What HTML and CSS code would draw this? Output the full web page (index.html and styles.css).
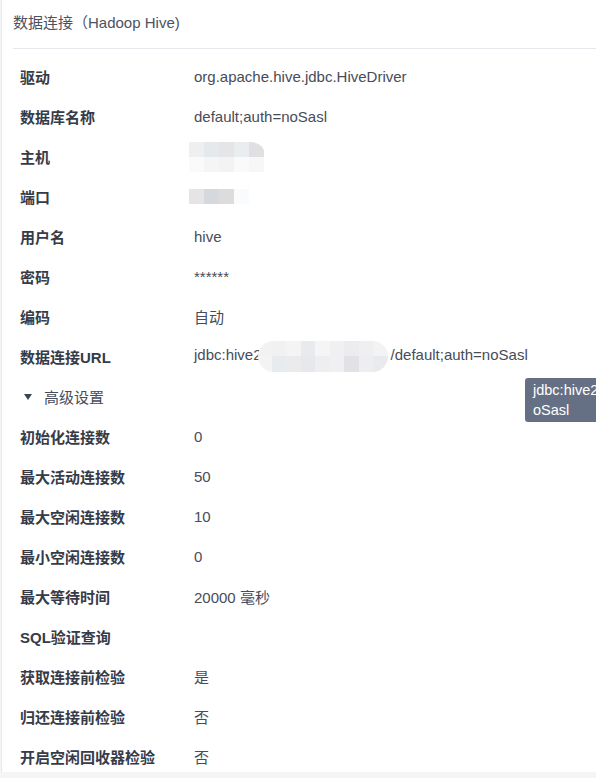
FILE: index.html
```html
<!DOCTYPE html>
<html lang="zh-CN">
<head>
<meta charset="utf-8">
<title>数据连接</title>
<link rel="stylesheet" href="styles.css">
</head>
<body>
<div class="panel">
  <div class="header">数据连接（Hadoop Hive)</div>
  <div class="list">
    <div class="row"><div class="label">驱动</div><div class="value">org.apache.hive.jdbc.HiveDriver</div></div>
    <div class="row"><div class="label">数据库名称</div><div class="value">default;auth=noSasl</div></div>
    <div class="row"><div class="label">主机</div><div class="value">
      <span class="blur blur-host">
        <i style="background:#efefef"></i><i style="background:#e6e9ec"></i><i style="background:#e5e5e7"></i><i style="background:#eaedf0"></i><i style="background:#e0e0e3"></i>
        <i style="background:#fafafa"></i><i style="background:#f5f5f5"></i><i style="background:#f3f3f3"></i><i style="background:#fafafa"></i><i style="background:#f7f7f7"></i>
      </span></div></div>
    <div class="row"><div class="label">端口</div><div class="value">
      <span class="blur blur-port">
        <i style="background:#e5e5e5"></i><i style="background:#d5d9dd"></i><i style="background:#dcdcdc"></i><i style="background:#fafbfd"></i>
      </span></div></div>
    <div class="row"><div class="label">用户名</div><div class="value">hive</div></div>
    <div class="row"><div class="label">密码</div><div class="value">******</div></div>
    <div class="row"><div class="label">编码</div><div class="value">自动</div></div>
    <div class="row"><div class="label">数据连接URL</div><div class="value">jdbc:hive2<span class="blur blur-url">
        <i style="background:#f2f2f3"></i><i style="background:#f1f1f2"></i><i style="background:#f4f4f5"></i><i style="background:#e9eaee"></i><i style="background:#f5f5f6"></i><i style="background:#f0f0f2"></i><i style="background:#ececef"></i><i style="background:#efeff1"></i><i style="background:#f3f3f4"></i>
        <i style="background:#f3f3f3"></i><i style="background:#e8ebee"></i><i style="background:#ebebee"></i><i style="background:#e7e8ec"></i><i style="background:#eeeef1"></i><i style="background:#f0f0f2"></i><i style="background:#e1e2e6"></i><i style="background:#eeeef0"></i><i style="background:#e9eaed"></i>
      </span>/default;auth=noSasl</div></div>
    <div class="row advanced"><span class="caret"></span><span class="adv-text">高级设置</span></div>
    <div class="row"><div class="label">初始化连接数</div><div class="value">0</div></div>
    <div class="row"><div class="label">最大活动连接数</div><div class="value">50</div></div>
    <div class="row"><div class="label">最大空闲连接数</div><div class="value">10</div></div>
    <div class="row"><div class="label">最小空闲连接数</div><div class="value">0</div></div>
    <div class="row"><div class="label">最大等待时间</div><div class="value">20000 毫秒</div></div>
    <div class="row"><div class="label">SQL验证查询</div><div class="value"></div></div>
    <div class="row"><div class="label">获取连接前检验</div><div class="value">是</div></div>
    <div class="row"><div class="label">归还连接前检验</div><div class="value">否</div></div>
    <div class="row"><div class="label">开启空闲回收器检验</div><div class="value">否</div></div>
  </div>
  <div class="tooltip">jdbc:hive2<br>oSasl</div>
</div>
</body>
</html>
```

FILE: styles.css
```css
html, body {
  margin: 0;
  padding: 0;
}
body {
  background: #f4f5f7;
  width: 596px;
  height: 778px;
  overflow: hidden;
  font-family: "Liberation Sans", "Noto Sans CJK SC", sans-serif;
  font-size: 15px;
}
.panel {
  position: relative;
  margin-left: 1px;
  border-left: 1px solid #e9e9eb;
  background: #fff;
  height: 772px;
  overflow: hidden;
}
.header {
  margin: 0 0 0 11px;
  height: 48px;
  line-height: 46px;
  color: #4d5260;
  border-bottom: 1px solid #e6e8ed;
}
.list {
  padding-top: 7px;
}
.row {
  display: flex;
  align-items: center;
  height: 40px;
  padding-left: 18px;
}
.label {
  width: 174px;
  flex: none;
  font-weight: 700;
  color: #363b48;
}
.value {
  color: #474c59;
  white-space: nowrap;
}
.blur {
  display: inline-grid;
  vertical-align: middle;
  overflow: hidden;
}
.blur i {
  display: block;
}
.blur-host {
  grid-template-columns: repeat(5, 15px);
  grid-template-rows: 15px 15px;
  margin-left: -5px;
  margin-top: 2px;
  border-top-right-radius: 14px 10px;
}
.blur-port {
  grid-template-columns: repeat(4, 15px);
  grid-template-rows: 15px;
  margin-left: -5px;
  margin-top: -3px;
}
.blur-url {
  grid-template-columns: 14px repeat(8, 14.5px);
  grid-template-rows: 15px 16px;
  width: 130px;
  margin: -6px 3px -6px -4px;
  border-radius: 16px;
}
.advanced {
  padding-left: 22px;
  color: #474c59;
}
.caret {
  width: 0;
  height: 0;
  border-left: 4.5px solid transparent;
  border-right: 4.5px solid transparent;
  border-top: 6px solid #3d4658;
  margin-right: 12px;
  margin-top: 1px;
}
.tooltip {
  position: absolute;
  left: 523px;
  top: 378px;
  width: 120px;
  padding: 2px 8px;
  font-size: 14.5px;
  line-height: 20px;
  background: #667085;
  color: #fff;
  border-radius: 3px;
  white-space: nowrap;
}
```
